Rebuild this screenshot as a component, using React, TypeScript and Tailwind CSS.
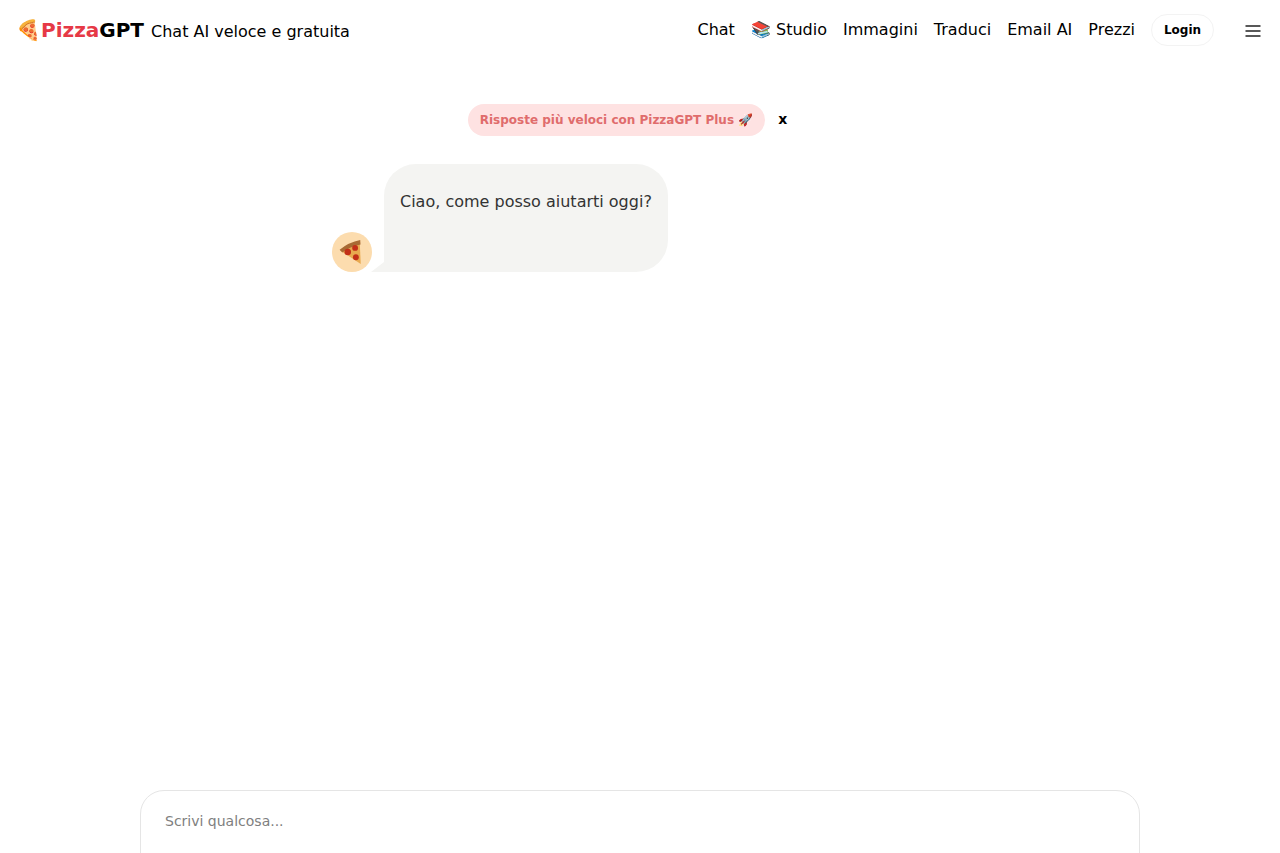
function PizzaSlice() {
  return (
    <svg className="w-[26px] h-[26px] mr-[2px] blur-[0.5px]" viewBox="0 0 24 24">
      <path d="M2 10.5 L20 1.5 L21 23 Z" fill="#e8a94f" />
      <path d="M1.5 10 Q10 3 20.5 1 L20.8 5 Q11 7 4 12.5 Z" fill="#a86a34" />
      <circle cx="9" cy="12" r="3" fill="#c22f18" />
      <circle cx="15.8" cy="8.2" r="2.7" fill="#c22f18" />
      <circle cx="16.5" cy="16.8" r="2.7" fill="#c22f18" />
    </svg>
  );
}

export default function App() {
  const links = ["Immagini", "Traduci", "Email AI", "Prezzi"];

  return (
    <div className="h-[853px] overflow-hidden bg-white flex flex-col font-['DejaVu_Sans',sans-serif] text-black">
      {/* Navbar */}
      <div className="h-[60px] flex items-center justify-between pl-[16px] pr-[19px] shrink-0">
        <div className="flex items-center">
          <span className="text-[20px] leading-[28px] font-bold">
            <span>🍕</span>
            <span className="text-[#e63946]">Pizza</span>
            <span>GPT</span>
          </span>
          <span className="ml-[7px] text-[16px] leading-[24px] mt-[4px]">Chat AI veloce e gratuita</span>
        </div>
        <div className="flex items-center text-[16px] leading-[24px]">
          <div className="flex items-center gap-4 mr-4">
            <span>Chat</span>
            <span>📚 Studio</span>
            {links.map((l) => (
              <span key={l}>{l}</span>
            ))}
          </div>
          <button className="h-8 w-[63px] rounded-full border border-[#f3f3f3] text-[12px] font-bold">Login</button>
          <svg className="ml-[31px] mt-[2px] w-[16px] h-[16px]" viewBox="0 0 16 16" fill="none" stroke="#222" strokeWidth="1.5">
            <path d="M0.5 3h15M0.5 8h15M0.5 13h15" />
          </svg>
        </div>
      </div>

      {/* Promo */}
      <div className="mt-[44px] mr-[25px] flex justify-center items-center shrink-0">
        <span className="h-8 flex items-center px-3 pb-[1px] rounded-full bg-[#fee2e2] text-[#e06c6c] text-[12px] font-bold">
          Risposte più veloci con PizzaGPT Plus 🚀
        </span>
        <span className="ml-[13px] mb-[2px] text-[14px] font-bold">x</span>
      </div>

      {/* Chat */}
      <div className="flex-1 min-h-0 mt-[28px]">
        <div className="w-[616px] mx-auto flex items-end">
          <div className="w-10 h-10 rounded-full bg-[#fcdcae] flex items-center justify-center shrink-0 z-10">
            <PizzaSlice />
          </div>
          <div className="relative ml-3 w-[284px] h-[108px] rounded-[32px] rounded-bl-none bg-[#f4f4f2] px-4 py-[26px] text-[16px] leading-[24px] text-[#333333]">
            <span className="absolute left-[-13px] bottom-0 w-[13px] h-[10px] bg-[#f4f4f2] [clip-path:polygon(100%_0,100%_100%,0_100%)]" />
            Ciao, come posso aiutarti oggi?
          </div>
        </div>
      </div>

      {/* Input */}
      <div className="shrink-0 h-[63px] flex justify-center">
        <div className="w-[1000px] h-[100px] rounded-[24px] border border-[#e5e5e5] bg-white px-6 py-[20px] text-[14px] leading-[20px] text-[#808080]">
          Scrivi qualcosa...
        </div>
      </div>
    </div>
  );
}
